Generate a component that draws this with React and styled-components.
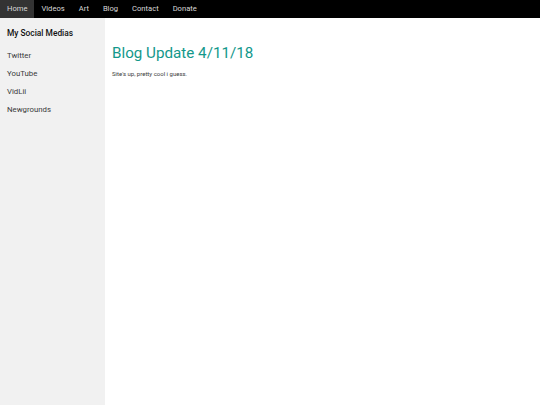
import React from "react";
import styled, { createGlobalStyle } from "styled-components";

const GlobalStyle = createGlobalStyle`
  html, body {
    margin: 0;
    padding: 0;
    height: 100%;
  }
  body {
    font-family: Roboto, "Liberation Sans", sans-serif;
    background: #fff;
    color: #000;
  }
  #root {
    height: 100%;
  }
`;

const Page = styled.div`
  display: flex;
  flex-direction: column;
  height: 100%;
`;

const TopBar = styled.nav`
  display: flex;
  height: 18px;
  background: #000;
`;

const NavItem = styled.a`
  padding: 0 7px;
  line-height: 18px;
  font-size: 7.6px;
  color: #d8d8d8;
  text-decoration: none;
  background: ${(p) => (p.$active ? "#333" : "transparent")};
`;

const Body = styled.div`
  display: flex;
  flex: 1;
`;

const Sidebar = styled.aside`
  width: 105px;
  background: #f1f1f1;
  padding-top: 7px;
`;

const SideTitle = styled.h4`
  margin: 0 0 6px;
  padding: 0 7px;
  font-size: 8.4px;
  font-weight: 500;
  line-height: 16px;
  color: #111;
`;

const SideLink = styled.a`
  display: block;
  padding: 0 7px;
  line-height: 18px;
  font-size: 7.8px;
  color: #3a3a3a;
  text-decoration: none;
`;

const Main = styled.main`
  flex: 1;
  padding: 0 7px;
`;

const Heading = styled.h1`
  margin: 23px 0 0;
  font-size: 15.2px;
  font-weight: 400;
  line-height: 24px;
  color: #13988b;
`;

const Text = styled.p`
  margin: 4px 0 0;
  font-size: 6px;
  line-height: 10px;
  color: #3a3a3a;
`;

const navItems = ["Home", "Videos", "Art", "Blog", "Contact", "Donate"];
const socials = ["Twitter", "YouTube", "VidLii", "Newgrounds"];

export default function App() {
  return (
    <Page>
      <GlobalStyle />
      <TopBar>
        {navItems.map((item, i) => (
          <NavItem key={item} href="#" $active={i === 0}>
            {item}
          </NavItem>
        ))}
      </TopBar>
      <Body>
        <Sidebar>
          <SideTitle>My Social Medias</SideTitle>
          {socials.map((s) => (
            <SideLink key={s} href="#">
              {s}
            </SideLink>
          ))}
        </Sidebar>
        <Main>
          <Heading>Blog Update 4/11/18</Heading>
          <Text>Site's up, pretty cool i guess.</Text>
        </Main>
      </Body>
    </Page>
  );
}
